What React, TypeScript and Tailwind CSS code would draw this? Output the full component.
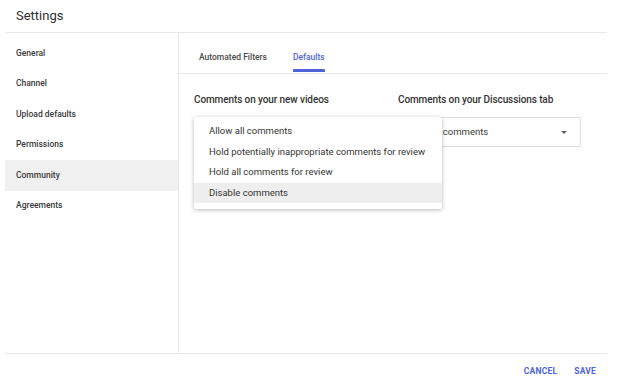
import React from 'react';

const NAV_ITEMS = ['General', 'Channel', 'Upload defaults', 'Permissions', 'Community', 'Agreements'];

const MENU_OPTIONS = [
  'Allow all comments',
  'Hold potentially inappropriate comments for review',
  'Hold all comments for review',
  'Disable comments',
];

const SelectBox: React.FC<{ value: string }> = ({ value }) => (
  <div className="h-[30px] w-[183px] rounded-[2px] border border-[#dcdcdc] flex items-center justify-between pl-[6px] pr-[13px]">
    <span className="text-[9.5px] text-[#3a3a3a] whitespace-nowrap">{value}</span>
    <div className="w-0 h-0 border-l-[3.5px] border-r-[3.5px] border-t-[3.5px] border-l-transparent border-r-transparent border-t-[#606060]" />
  </div>
);

export default function App() {
  const selected = 'Community';

  return (
    <div className="w-[620px] h-[392px] bg-white overflow-hidden" style={{ fontFamily: 'Roboto, "Liberation Sans", sans-serif' }}>
      <div className="ml-[5px] w-[602px]">
        <div className="h-[33px] flex items-center pl-[11px] border-b border-[#e8e8e8]">
          <h1 className="text-[13px] text-[#2f2f2f] font-normal">Settings</h1>
        </div>

        <div className="flex h-[321px] border-b border-[#e8e8e8]">
          {/* sidebar */}
          <div className="w-[174px] shrink-0 border-r border-[#e8e8e8] pt-[5px]">
            {NAV_ITEMS.map(item => (
              <div
                key={item}
                className={`h-[30.5px] flex items-center pl-[11px] text-[8.5px] font-medium text-[#3a3a3a] ${item === selected ? 'bg-[#f0f0f0]' : ''}`}
              >
                {item}
              </div>
            ))}
          </div>

          {/* content */}
          <div className="flex-1">
            <div className="h-[41px] flex items-end gap-[26px] pl-[20px] border-b border-[#e8e8e8]">
              <div className="h-full flex items-center pt-[8px] text-[8.5px] font-medium text-[#4a4a4a]">Automated Filters</div>
              <div className="h-full flex flex-col">
                <div className="flex-1 flex items-center pt-[12px] text-[8.5px] font-medium text-[#4f63d9]">Defaults</div>
                <div className="h-[3px] mb-[1px] bg-[#4f63d9] rounded-t-[1px]" />
              </div>
            </div>

            <div className="relative pl-[15px] pt-[20px]">
              <div className="flex gap-[21px]">
                <div className="flex flex-col gap-[11px]">
                  <div className="text-[10px] font-medium text-[#333] leading-[12px] tracking-[-0.1px]">Comments on your new videos</div>
                  <SelectBox value="Allow all comments" />
                </div>
                <div className="flex flex-col gap-[11px]">
                  <div className="text-[10px] font-medium text-[#333] leading-[12px] tracking-[-0.1px]">Comments on your Discussions tab</div>
                  <SelectBox value="Allow all comments" />
                </div>
              </div>

              {/* open dropdown menu */}
              <div className="absolute left-[15px] top-[43px] w-[248px] bg-white rounded-[2px] shadow-[0_1px_4px_rgba(0,0,0,0.28)] pt-[4px] pb-[6px]">
                {MENU_OPTIONS.map((opt, i) => (
                  <div
                    key={opt}
                    className={`h-[20.5px] flex items-center pl-[15px] text-[9.5px] text-[#333] whitespace-nowrap ${i === MENU_OPTIONS.length - 1 ? 'bg-[#eeeeee]' : ''}`}
                  >
                    {opt}
                  </div>
                ))}
              </div>
            </div>
          </div>
        </div>

        <div className="h-[35px] flex items-center justify-end gap-[17px] pr-[11px]">
          <button className="text-[8.5px] font-bold text-[#4f63d9] tracking-[0.2px]">CANCEL</button>
          <button className="text-[8.5px] font-bold text-[#4f63d9] tracking-[0.2px]">SAVE</button>
        </div>
      </div>
    </div>
  );
}
